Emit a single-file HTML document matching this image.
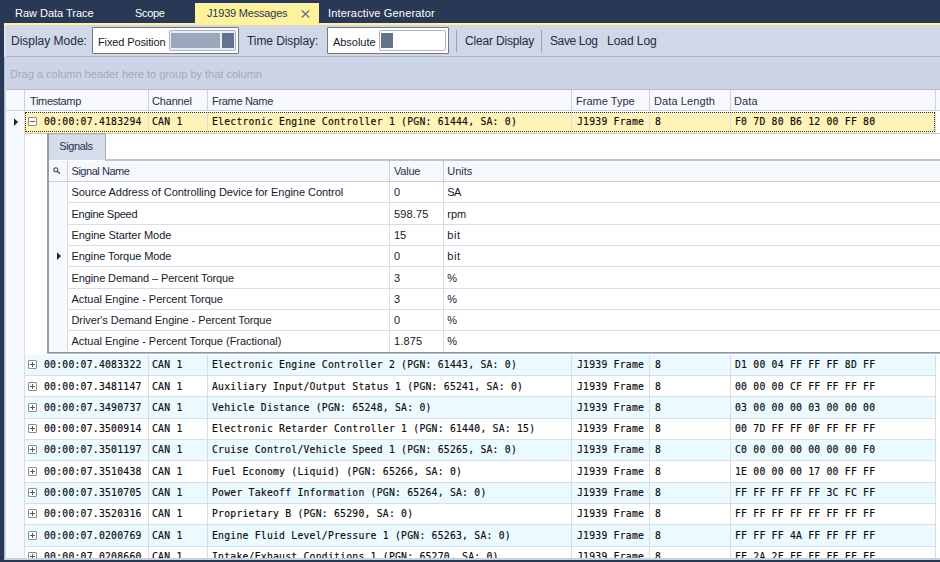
<!DOCTYPE html><html><head><meta charset="utf-8"><title>J1939 Messages</title><style>
html,body{margin:0;padding:0;}
body{width:940px;height:562px;overflow:hidden;background:#293955;position:relative;font-family:"Liberation Sans",sans-serif;font-size:11px;color:#15192a;}
div,span{position:absolute;box-sizing:border-box;white-space:nowrap;}
.t{line-height:14px;height:14px;}
.m{font-family:"DejaVu Sans Mono","Liberation Mono",monospace;font-size:9.75px;letter-spacing:0.23px;line-height:14px;height:14px;color:#0a0a0a;-webkit-text-stroke:0.15px #0a0a0a;}
.tab{color:#fff;top:6px;line-height:14px;}
.tb{font-size:12px;line-height:16px;top:33px;color:#1f2a44;}
.vl{width:1px;background:#d8ddea;}
.hl{height:1px;background:#d8ddea;left:0;}
.box{width:9px;height:9px;border:1px solid #8d8d8d;border-radius:1px;background:#fff;}
.box i{position:absolute;left:1px;top:3px;width:5px;height:1px;background:#5a5a5a;}
.box b{position:absolute;left:3px;top:1px;width:1px;height:5px;background:#5a5a5a;}
</style></head><body>
<div style="left:195px;top:3px;width:124px;height:22px;background:#fff29d;"></div>
<div style="left:4px;top:23px;width:936px;height:2px;background:#fff29d;"></div>
<span class="t tab" style="left:15px;letter-spacing:-0.02px;">Raw Data Trace</span>
<span class="t tab" style="left:135px;letter-spacing:-0.3px;">Scope</span>
<span class="t tab" style="left:207px;color:#2a3550;letter-spacing:-0.2px;">J1939 Messages</span>
<svg style="position:absolute;left:301px;top:10px" width="9" height="8" viewBox="0 0 9 8"><path d="M0.8 0.5 L8.2 7.5 M8.2 0.5 L0.8 7.5" stroke="#64718d" stroke-width="1.3" fill="none"/></svg>
<span class="t tab" style="left:328px;letter-spacing:0.17px;">Interactive Generator</span>
<div style="left:4px;top:25px;width:936px;height:32px;background:#d0d7e7;"></div>
<span class="tb" style="left:11px;letter-spacing:-0.01px;">Display Mode:</span>
<div style="left:92px;top:27px;width:147px;height:27px;background:#fff;border:1px solid #75787e;border-radius:1px;"></div>
<span class="t" style="left:98px;top:35px;letter-spacing:-0.12px;">Fixed Position</span>
<div style="left:169px;top:30px;width:67px;height:21px;border:1px solid #aab4c8;border-radius:2px;background:#e9edf5;"></div>
<div style="left:171px;top:33px;width:49px;height:15px;background:#9ba7ba;"></div>
<div style="left:222px;top:33px;width:12px;height:15px;background:#63738e;"></div>
<span class="tb" style="left:247px;letter-spacing:-0.08px;">Time Display:</span>
<div style="left:327px;top:27px;width:122px;height:27px;background:#fff;border:1px solid #75787e;border-radius:1px;"></div>
<span class="t" style="left:333px;top:35px;letter-spacing:-0.04px;">Absolute</span>
<div style="left:379px;top:30px;width:67px;height:21px;border:1px solid #aab4c8;border-radius:2px;background:#fff;"></div>
<div style="left:381px;top:33px;width:12px;height:15px;background:#63738e;"></div>
<div style="left:456px;top:30px;width:1px;height:22px;background:#9aa3b5;"></div>
<span class="tb" style="left:465px;letter-spacing:-0.18px;">Clear Display</span>
<div style="left:541px;top:30px;width:1px;height:22px;background:#9aa3b5;"></div>
<span class="tb" style="left:550px;letter-spacing:-0.4px;">Save Log</span>
<span class="tb" style="left:607px;letter-spacing:-0.04px;">Load Log</span>
<div style="left:5px;top:56px;width:935px;height:504px;background:#fff;border-left:1px solid #b9c2d4;border-top:1px solid #aab3c6;"></div>
<div style="left:6px;top:57px;width:934px;height:32px;background:#cdd4e5;"></div>
<span class="t" style="left:10px;top:67px;color:#9faac1;">Drag a column header here to group by that column</span>
<div style="left:6px;top:89px;width:934px;height:1px;background:#b4bdcf;"></div>
<div style="left:6px;top:90px;width:934px;height:21px;background:#f7f8fc;"></div>
<div style="left:6px;top:110px;width:934px;height:1px;background:#c9d0e0;"></div>
<div class="vl" style="left:24px;top:90px;height:21px;background:#c9d0e0;"></div>
<div class="vl" style="left:148px;top:90px;height:21px;background:#c9d0e0;"></div>
<div class="vl" style="left:207px;top:90px;height:21px;background:#c9d0e0;"></div>
<div class="vl" style="left:571px;top:90px;height:21px;background:#c9d0e0;"></div>
<div class="vl" style="left:649px;top:90px;height:21px;background:#c9d0e0;"></div>
<div class="vl" style="left:730px;top:90px;height:21px;background:#c9d0e0;"></div>
<div class="vl" style="left:935px;top:90px;height:21px;background:#c9d0e0;"></div>
<span class="t" style="left:30px;top:94px;color:#27314b;letter-spacing:-0.34px;">Timestamp</span>
<span class="t" style="left:152px;top:94px;color:#27314b;letter-spacing:-0.18px;">Channel</span>
<span class="t" style="left:212px;top:94px;color:#27314b;letter-spacing:-0.32px;">Frame Name</span>
<span class="t" style="left:576px;top:94px;color:#27314b;letter-spacing:0.02px;">Frame Type</span>
<span class="t" style="left:654px;top:94px;color:#27314b;letter-spacing:0.1px;">Data Length</span>
<span class="t" style="left:734px;top:94px;color:#27314b;letter-spacing:0.12px;">Data</span>
<div style="left:6px;top:111px;width:18px;height:449px;background:#f6f8fc;"></div>
<div class="vl" style="left:24px;top:111px;height:449px;background:#d8ddea;"></div>
<div style="left:25px;top:112px;width:911px;height:21px;background:#fff3b8;"></div>
<div class="vl" style="left:148px;top:112px;height:21px;"></div>
<div class="vl" style="left:207px;top:112px;height:21px;"></div>
<div class="vl" style="left:571px;top:112px;height:21px;"></div>
<div class="vl" style="left:649px;top:112px;height:21px;"></div>
<div class="vl" style="left:730px;top:112px;height:21px;"></div>
<div class="vl" style="left:935px;top:112px;height:21px;"></div>
<div class="box" style="left:28px;top:117px;"><i></i></div>
<span class="m" style="left:44px;top:115px;">00:00:07.4183294</span>
<span class="m" style="left:152px;top:115px;">CAN 1</span>
<span class="m" style="left:212px;top:115px;">Electronic Engine Controller 1 (PGN: 61444, SA: 0)</span>
<span class="m" style="left:577px;top:115px;">J1939 Frame</span>
<span class="m" style="left:655px;top:115px;">8</span>
<span class="m" style="left:735px;top:115px;">F0 7D 80 B6 12 00 FF 80</span>
<div style="left:25px;top:112px;width:910px;height:20px;border:1px dotted #333;"></div>
<svg style="position:absolute;left:14px;top:118px" width="5" height="9" viewBox="0 0 5 9"><path d="M0 0.3 L4 4.1 L0 7.9 Z" fill="#1b2336"/></svg>
<div class="hl" style="left:25px;top:133px;width:915px;background:#bec7d9;"></div>
<div style="left:47px;top:134px;width:893px;height:220px;background:#fff;"></div>
<div style="left:47px;top:133px;width:59px;height:27px;background:#d6dcea;border-top:1px solid #a3aec4;border-right:1px solid #a3aec4;"></div>
<div style="left:49px;top:134px;width:56px;height:1px;background:#c3cadb;"></div>
<span class="t" style="left:59.3px;top:139px;color:#27314b;letter-spacing:-0.38px;">Signals</span>
<div style="left:47px;top:133px;width:2px;height:221px;background:#929eb6;"></div>
<div style="left:105px;top:159px;width:835px;height:2px;background:#b9c2d6;"></div>
<div style="left:49px;top:161px;width:891px;height:20px;background:#f7f8fc;"></div>
<div style="left:49px;top:181px;width:891px;height:1px;background:#c9d0e0;"></div>
<div class="vl" style="left:67px;top:161px;height:21px;background:#c9d0e0;"></div>
<div class="vl" style="left:389px;top:161px;height:21px;background:#c9d0e0;"></div>
<div class="vl" style="left:443px;top:161px;height:21px;background:#c9d0e0;"></div>
<svg style="position:absolute;left:53px;top:166.5px" width="8" height="8" viewBox="0 0 8 8"><circle cx="2.8" cy="2.8" r="2" stroke="#4a4f5a" stroke-width="1.1" fill="none"/><path d="M4.3 4.3 L6.8 6.8" stroke="#4a4f5a" stroke-width="1.4"/></svg>
<span class="t" style="left:71.5px;top:164px;color:#27314b;letter-spacing:-0.46px;">Signal Name</span>
<span class="t" style="left:394px;top:164px;color:#27314b;letter-spacing:-0.23px;">Value</span>
<span class="t" style="left:447.3px;top:164px;color:#27314b;letter-spacing:-0.02px;">Units</span>
<div style="left:49px;top:182px;width:18px;height:170px;background:#f6f8fc;"></div>
<div class="vl" style="left:67px;top:182px;height:170px;"></div>
<div class="vl" style="left:389px;top:182px;height:20px;"></div>
<div class="vl" style="left:443px;top:182px;height:20px;"></div>
<div class="hl" style="left:68px;top:202px;width:872px;"></div>
<span class="t" style="left:71.5px;top:185px;letter-spacing:-0.04px;">Source Address of Controlling Device for Engine Control</span>
<span class="t" style="left:394px;top:185px;">0</span>
<span class="t" style="left:447.3px;top:185px;letter-spacing:-0.6px;">SA</span>
<div class="vl" style="left:389px;top:203px;height:21px;"></div>
<div class="vl" style="left:443px;top:203px;height:21px;"></div>
<div class="hl" style="left:68px;top:224px;width:872px;"></div>
<span class="t" style="left:71.5px;top:207px;letter-spacing:-0.28px;">Engine Speed</span>
<span class="t" style="left:394px;top:207px;letter-spacing:0.15px;">598.75</span>
<span class="t" style="left:447.3px;top:207px;letter-spacing:-0.08px;">rpm</span>
<div class="vl" style="left:389px;top:225px;height:20px;"></div>
<div class="vl" style="left:443px;top:225px;height:20px;"></div>
<div class="hl" style="left:68px;top:245px;width:872px;"></div>
<span class="t" style="left:71.5px;top:228px;letter-spacing:-0.06px;">Engine Starter Mode</span>
<span class="t" style="left:394px;top:228px;">15</span>
<span class="t" style="left:447.3px;top:228px;letter-spacing:0.54px;">bit</span>
<div class="vl" style="left:389px;top:246px;height:20px;"></div>
<div class="vl" style="left:443px;top:246px;height:20px;"></div>
<div class="hl" style="left:68px;top:266px;width:872px;"></div>
<span class="t" style="left:71.5px;top:249px;letter-spacing:-0.08px;">Engine Torque Mode</span>
<span class="t" style="left:394px;top:249px;">0</span>
<span class="t" style="left:447.3px;top:249px;letter-spacing:0.54px;">bit</span>
<div class="vl" style="left:389px;top:267px;height:21px;"></div>
<div class="vl" style="left:443px;top:267px;height:21px;"></div>
<div class="hl" style="left:68px;top:288px;width:872px;"></div>
<span class="t" style="left:71.5px;top:271px;letter-spacing:-0.1px;">Engine Demand – Percent Torque</span>
<span class="t" style="left:394px;top:271px;">3</span>
<span class="t" style="left:447.3px;top:271px;">%</span>
<div class="vl" style="left:389px;top:289px;height:20px;"></div>
<div class="vl" style="left:443px;top:289px;height:20px;"></div>
<div class="hl" style="left:68px;top:309px;width:872px;"></div>
<span class="t" style="left:71.5px;top:292px;letter-spacing:-0.02px;">Actual Engine - Percent Torque</span>
<span class="t" style="left:394px;top:292px;">3</span>
<span class="t" style="left:447.3px;top:292px;">%</span>
<div class="vl" style="left:389px;top:310px;height:20px;"></div>
<div class="vl" style="left:443px;top:310px;height:20px;"></div>
<div class="hl" style="left:68px;top:330px;width:872px;"></div>
<span class="t" style="left:71.5px;top:313px;letter-spacing:-0.08px;">Driver's Demand Engine - Percent Torque</span>
<span class="t" style="left:394px;top:313px;">0</span>
<span class="t" style="left:447.3px;top:313px;">%</span>
<div class="vl" style="left:389px;top:331px;height:21px;"></div>
<div class="vl" style="left:443px;top:331px;height:21px;"></div>
<span class="t" style="left:71.5px;top:334px;letter-spacing:-0.02px;">Actual Engine - Percent Torque (Fractional)</span>
<span class="t" style="left:394px;top:334px;letter-spacing:0.14px;">1.875</span>
<span class="t" style="left:447.3px;top:334px;">%</span>
<svg style="position:absolute;left:57px;top:252px" width="5" height="9" viewBox="0 0 5 9"><path d="M0 0.3 L4 4.1 L0 7.9 Z" fill="#1b2336"/></svg>
<div style="left:47px;top:352px;width:893px;height:1px;background:#8996ae;"></div>
<div style="left:47px;top:353px;width:893px;height:1px;background:#b3bdd0;"></div>
<div style="left:25px;top:355px;width:911px;height:20px;background:#eafaff;"></div>
<div class="vl" style="left:148px;top:355px;height:20px;"></div>
<div class="vl" style="left:207px;top:355px;height:20px;"></div>
<div class="vl" style="left:571px;top:355px;height:20px;"></div>
<div class="vl" style="left:649px;top:355px;height:20px;"></div>
<div class="vl" style="left:730px;top:355px;height:20px;"></div>
<div class="vl" style="left:935px;top:355px;height:20px;"></div>
<div class="box" style="left:28px;top:360px;"><i></i><b></b></div>
<span class="m" style="left:44px;top:358px;">00:00:07.4083322</span>
<span class="m" style="left:152px;top:358px;">CAN 1</span>
<span class="m" style="left:212px;top:358px;">Electronic Engine Controller 2 (PGN: 61443, SA: 0)</span>
<span class="m" style="left:577px;top:358px;">J1939 Frame</span>
<span class="m" style="left:655px;top:358px;">8</span>
<span class="m" style="left:735px;top:358px;">D1 00 04 FF FF FF 8D FF</span>
<div class="hl" style="left:25px;top:375px;width:911px;"></div>
<div style="left:25px;top:376px;width:911px;height:20px;background:#fff;"></div>
<div class="vl" style="left:148px;top:376px;height:20px;"></div>
<div class="vl" style="left:207px;top:376px;height:20px;"></div>
<div class="vl" style="left:571px;top:376px;height:20px;"></div>
<div class="vl" style="left:649px;top:376px;height:20px;"></div>
<div class="vl" style="left:730px;top:376px;height:20px;"></div>
<div class="vl" style="left:935px;top:376px;height:20px;"></div>
<div class="box" style="left:28px;top:382px;"><i></i><b></b></div>
<span class="m" style="left:44px;top:380px;">00:00:07.3481147</span>
<span class="m" style="left:152px;top:380px;">CAN 1</span>
<span class="m" style="left:212px;top:380px;">Auxiliary Input/Output Status 1 (PGN: 65241, SA: 0)</span>
<span class="m" style="left:577px;top:380px;">J1939 Frame</span>
<span class="m" style="left:655px;top:380px;">8</span>
<span class="m" style="left:735px;top:380px;">00 00 00 CF FF FF FF FF</span>
<div class="hl" style="left:25px;top:396px;width:911px;"></div>
<div style="left:25px;top:397px;width:911px;height:21px;background:#eafaff;"></div>
<div class="vl" style="left:148px;top:397px;height:21px;"></div>
<div class="vl" style="left:207px;top:397px;height:21px;"></div>
<div class="vl" style="left:571px;top:397px;height:21px;"></div>
<div class="vl" style="left:649px;top:397px;height:21px;"></div>
<div class="vl" style="left:730px;top:397px;height:21px;"></div>
<div class="vl" style="left:935px;top:397px;height:21px;"></div>
<div class="box" style="left:28px;top:403px;"><i></i><b></b></div>
<span class="m" style="left:44px;top:401px;">00:00:07.3490737</span>
<span class="m" style="left:152px;top:401px;">CAN 1</span>
<span class="m" style="left:212px;top:401px;">Vehicle Distance (PGN: 65248, SA: 0)</span>
<span class="m" style="left:577px;top:401px;">J1939 Frame</span>
<span class="m" style="left:655px;top:401px;">8</span>
<span class="m" style="left:735px;top:401px;">03 00 00 00 03 00 00 00</span>
<div class="hl" style="left:25px;top:418px;width:911px;"></div>
<div style="left:25px;top:419px;width:911px;height:20px;background:#fff;"></div>
<div class="vl" style="left:148px;top:419px;height:20px;"></div>
<div class="vl" style="left:207px;top:419px;height:20px;"></div>
<div class="vl" style="left:571px;top:419px;height:20px;"></div>
<div class="vl" style="left:649px;top:419px;height:20px;"></div>
<div class="vl" style="left:730px;top:419px;height:20px;"></div>
<div class="vl" style="left:935px;top:419px;height:20px;"></div>
<div class="box" style="left:28px;top:424px;"><i></i><b></b></div>
<span class="m" style="left:44px;top:422px;">00:00:07.3500914</span>
<span class="m" style="left:152px;top:422px;">CAN 1</span>
<span class="m" style="left:212px;top:422px;">Electronic Retarder Controller 1 (PGN: 61440, SA: 15)</span>
<span class="m" style="left:577px;top:422px;">J1939 Frame</span>
<span class="m" style="left:655px;top:422px;">8</span>
<span class="m" style="left:735px;top:422px;">00 7D FF FF 0F FF FF FF</span>
<div class="hl" style="left:25px;top:439px;width:911px;"></div>
<div style="left:25px;top:440px;width:911px;height:20px;background:#eafaff;"></div>
<div class="vl" style="left:148px;top:440px;height:20px;"></div>
<div class="vl" style="left:207px;top:440px;height:20px;"></div>
<div class="vl" style="left:571px;top:440px;height:20px;"></div>
<div class="vl" style="left:649px;top:440px;height:20px;"></div>
<div class="vl" style="left:730px;top:440px;height:20px;"></div>
<div class="vl" style="left:935px;top:440px;height:20px;"></div>
<div class="box" style="left:28px;top:445px;"><i></i><b></b></div>
<span class="m" style="left:44px;top:443px;">00:00:07.3501197</span>
<span class="m" style="left:152px;top:443px;">CAN 1</span>
<span class="m" style="left:212px;top:443px;">Cruise Control/Vehicle Speed 1 (PGN: 65265, SA: 0)</span>
<span class="m" style="left:577px;top:443px;">J1939 Frame</span>
<span class="m" style="left:655px;top:443px;">8</span>
<span class="m" style="left:735px;top:443px;">C0 00 00 00 00 00 00 F0</span>
<div class="hl" style="left:25px;top:460px;width:911px;"></div>
<div style="left:25px;top:461px;width:911px;height:21px;background:#fff;"></div>
<div class="vl" style="left:148px;top:461px;height:21px;"></div>
<div class="vl" style="left:207px;top:461px;height:21px;"></div>
<div class="vl" style="left:571px;top:461px;height:21px;"></div>
<div class="vl" style="left:649px;top:461px;height:21px;"></div>
<div class="vl" style="left:730px;top:461px;height:21px;"></div>
<div class="vl" style="left:935px;top:461px;height:21px;"></div>
<div class="box" style="left:28px;top:467px;"><i></i><b></b></div>
<span class="m" style="left:44px;top:465px;">00:00:07.3510438</span>
<span class="m" style="left:152px;top:465px;">CAN 1</span>
<span class="m" style="left:212px;top:465px;">Fuel Economy (Liquid) (PGN: 65266, SA: 0)</span>
<span class="m" style="left:577px;top:465px;">J1939 Frame</span>
<span class="m" style="left:655px;top:465px;">8</span>
<span class="m" style="left:735px;top:465px;">1E 00 00 00 17 00 FF FF</span>
<div class="hl" style="left:25px;top:482px;width:911px;"></div>
<div style="left:25px;top:483px;width:911px;height:20px;background:#eafaff;"></div>
<div class="vl" style="left:148px;top:483px;height:20px;"></div>
<div class="vl" style="left:207px;top:483px;height:20px;"></div>
<div class="vl" style="left:571px;top:483px;height:20px;"></div>
<div class="vl" style="left:649px;top:483px;height:20px;"></div>
<div class="vl" style="left:730px;top:483px;height:20px;"></div>
<div class="vl" style="left:935px;top:483px;height:20px;"></div>
<div class="box" style="left:28px;top:488px;"><i></i><b></b></div>
<span class="m" style="left:44px;top:486px;">00:00:07.3510705</span>
<span class="m" style="left:152px;top:486px;">CAN 1</span>
<span class="m" style="left:212px;top:486px;">Power Takeoff Information (PGN: 65264, SA: 0)</span>
<span class="m" style="left:577px;top:486px;">J1939 Frame</span>
<span class="m" style="left:655px;top:486px;">8</span>
<span class="m" style="left:735px;top:486px;">FF FF FF FF FF 3C FC FF</span>
<div class="hl" style="left:25px;top:503px;width:911px;"></div>
<div style="left:25px;top:504px;width:911px;height:20px;background:#fff;"></div>
<div class="vl" style="left:148px;top:504px;height:20px;"></div>
<div class="vl" style="left:207px;top:504px;height:20px;"></div>
<div class="vl" style="left:571px;top:504px;height:20px;"></div>
<div class="vl" style="left:649px;top:504px;height:20px;"></div>
<div class="vl" style="left:730px;top:504px;height:20px;"></div>
<div class="vl" style="left:935px;top:504px;height:20px;"></div>
<div class="box" style="left:28px;top:509px;"><i></i><b></b></div>
<span class="m" style="left:44px;top:507px;">00:00:07.3520316</span>
<span class="m" style="left:152px;top:507px;">CAN 1</span>
<span class="m" style="left:212px;top:507px;">Proprietary B (PGN: 65290, SA: 0)</span>
<span class="m" style="left:577px;top:507px;">J1939 Frame</span>
<span class="m" style="left:655px;top:507px;">8</span>
<span class="m" style="left:735px;top:507px;">FF FF FF FF FF FF FF FF</span>
<div class="hl" style="left:25px;top:524px;width:911px;"></div>
<div style="left:25px;top:525px;width:911px;height:21px;background:#eafaff;"></div>
<div class="vl" style="left:148px;top:525px;height:21px;"></div>
<div class="vl" style="left:207px;top:525px;height:21px;"></div>
<div class="vl" style="left:571px;top:525px;height:21px;"></div>
<div class="vl" style="left:649px;top:525px;height:21px;"></div>
<div class="vl" style="left:730px;top:525px;height:21px;"></div>
<div class="vl" style="left:935px;top:525px;height:21px;"></div>
<div class="box" style="left:28px;top:531px;"><i></i><b></b></div>
<span class="m" style="left:44px;top:529px;">00:00:07.0200769</span>
<span class="m" style="left:152px;top:529px;">CAN 1</span>
<span class="m" style="left:212px;top:529px;">Engine Fluid Level/Pressure 1 (PGN: 65263, SA: 0)</span>
<span class="m" style="left:577px;top:529px;">J1939 Frame</span>
<span class="m" style="left:655px;top:529px;">8</span>
<span class="m" style="left:735px;top:529px;">FF FF FF 4A FF FF FF FF</span>
<div class="hl" style="left:25px;top:546px;width:911px;"></div>
<div style="left:25px;top:547px;width:911px;height:20px;background:#fff;"></div>
<div class="vl" style="left:148px;top:547px;height:20px;"></div>
<div class="vl" style="left:207px;top:547px;height:20px;"></div>
<div class="vl" style="left:571px;top:547px;height:20px;"></div>
<div class="vl" style="left:649px;top:547px;height:20px;"></div>
<div class="vl" style="left:730px;top:547px;height:20px;"></div>
<div class="vl" style="left:935px;top:547px;height:20px;"></div>
<div class="box" style="left:28px;top:552px;"><i></i><b></b></div>
<span class="m" style="left:44px;top:550px;">00:00:07.0208660</span>
<span class="m" style="left:152px;top:550px;">CAN 1</span>
<span class="m" style="left:212px;top:550px;">Intake/Exhaust Conditions 1 (PGN: 65270, SA: 0)</span>
<span class="m" style="left:577px;top:550px;">J1939 Frame</span>
<span class="m" style="left:655px;top:550px;">8</span>
<span class="m" style="left:735px;top:550px;">FF 2A 2F FF FF FF FF FF</span>
<div class="hl" style="left:25px;top:567px;width:911px;"></div>
<div style="left:0;top:558px;width:940px;height:2px;background:#c9d0e0;"></div>
<div style="left:0;top:560px;width:940px;height:2px;background:#293955;"></div>
<div style="left:0;top:0;width:4px;height:562px;background:#293955;"></div>
<div style="left:4px;top:25px;width:2px;height:32px;background:#dde3f0;"></div>
<div style="left:4px;top:57px;width:1px;height:502px;background:#adb6ca;"></div>
<div style="left:5px;top:57px;width:1px;height:502px;background:#d3d9e8;"></div>
</body></html>
